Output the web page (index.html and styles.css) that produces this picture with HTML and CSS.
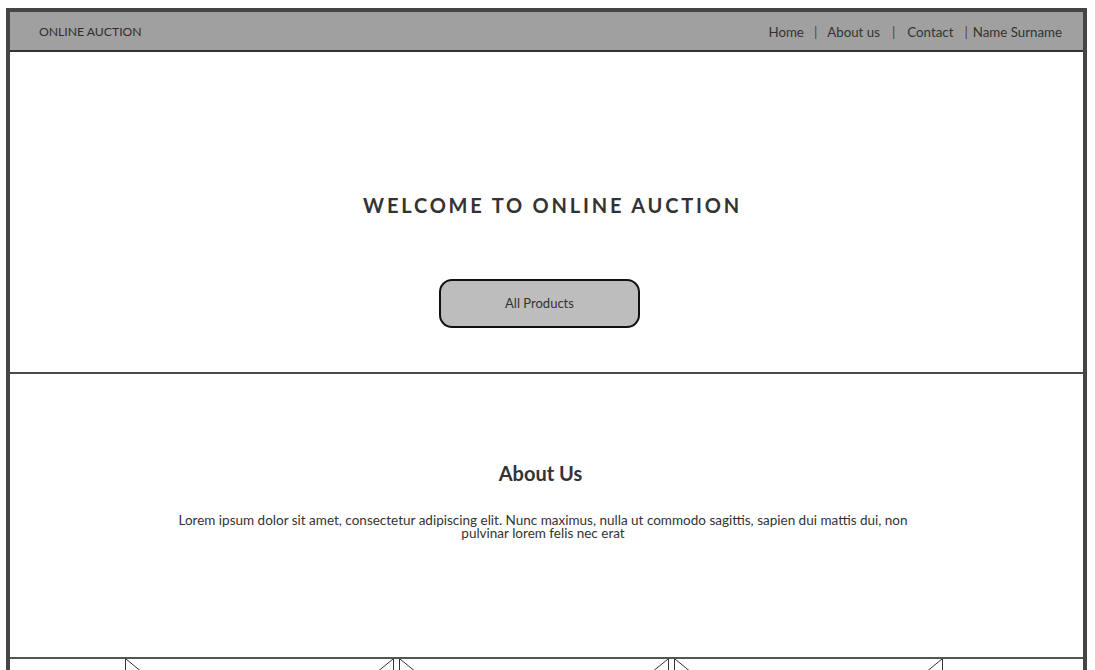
FILE: index.html
```html
<!DOCTYPE html>
<html lang="en">
<head>
<meta charset="utf-8">
<title>Online Auction</title>
<link rel="stylesheet" href="styles.css">
</head>
<body>
<div class="frame">
  <header class="topbar">
    <div class="brand">ONLINE AUCTION</div>
    <nav class="nav">
      <a class="nav-link">Home</a>
      <span class="sep">|</span>
      <a class="nav-link">About us</a>
      <span class="sep sep-wide">|</span>
      <a class="nav-link">Contact</a>
      <span class="sep sep-tight">|</span>
      <a class="nav-link">Name Surname</a>
    </nav>
  </header>
  <section class="hero">
    <h1 class="hero-title">WELCOME TO ONLINE AUCTION</h1>
    <button class="btn">All Products</button>
  </section>
  <section class="about">
    <h2 class="about-title">About Us</h2>
    <p class="about-text">Lorem ipsum dolor sit amet, consectetur adipiscing elit. Nunc maximus, nulla ut commodo sagittis, sapien dui mattis dui, non pulvinar lorem felis nec erat</p>
  </section>
  <section class="cards">
    <div class="card">
      <svg class="ph" viewBox="0 0 100 100" preserveAspectRatio="none"><line x1="0" y1="0" x2="100" y2="100"/><line x1="100" y1="0" x2="0" y2="100"/></svg>
    </div>
    <div class="card">
      <svg class="ph" viewBox="0 0 100 100" preserveAspectRatio="none"><line x1="0" y1="0" x2="100" y2="100"/><line x1="100" y1="0" x2="0" y2="100"/></svg>
    </div>
    <div class="card">
      <svg class="ph" viewBox="0 0 100 100" preserveAspectRatio="none"><line x1="0" y1="0" x2="100" y2="100"/><line x1="100" y1="0" x2="0" y2="100"/></svg>
    </div>
  </section>
</div>
</body>
</html>
```
FILE: styles.css
```css
* { box-sizing: border-box; }
html, body { margin: 0; padding: 0; background: #fff; }
body {
  font-family: Lato, "Open Sans", "Liberation Sans", sans-serif;
  color: #333;
  overflow: hidden;
  height: 670px;
}
.frame {
  margin: 8px 0 0 6px;
  width: 1081px;
  border: 4px solid #454545;
  border-bottom: none;
  min-height: 700px;
}
.topbar {
  height: 40px;
  background: #a0a0a0;
  border-bottom: 2px solid #333;
  display: flex;
  align-items: center;
  justify-content: space-between;
  padding: 1px 21px 0 29px;
}
.brand { color: #2e2e2e; font-size: 12.2px; }
.nav { display: flex; align-items: center; font-size: 13.3px; }
.nav-link { color: #333; }
.sep { color: #444; margin: 0 10px 0 10px; }
.sep-wide { margin: 0 12px 0 12px; }
.sep-tight { margin: 0 5px 0 11px; }
.hero {
  height: 322px;
  display: flex;
  flex-direction: column;
  align-items: center;
  padding-top: 141px;
  border-bottom: 2px solid #4a4a4a;
}
.hero-title {
  margin: 0 0 0 12px;
  font-size: 20px;
  line-height: 24px;
  font-weight: 700;
  letter-spacing: 2.8px;
  color: #333;
}
.btn {
  margin-top: 62px;
  width: 201px;
  height: 49px;
  border: 2.5px solid #111;
  border-radius: 13px;
  background: #bdbdbd;
  font-family: inherit;
  font-size: 13px;
  color: #333;
  padding: 0 0 2px 0;
  margin-left: -14px;
}
.about {
  height: 285px;
  display: flex;
  flex-direction: column;
  align-items: center;
  padding-top: 87px;
  border-bottom: 2px solid #555;
}
.about-title {
  margin: 0 0 0 -12px;
  font-size: 20px;
  line-height: 24px;
  font-weight: 700;
  color: #333;
}
.about-text {
  margin: 29px 0 0 -7px;
  width: 760px;
  text-align: center;
  font-size: 13.5px;
  line-height: 13px;
  color: #333;
}
.cards {
  display: flex;
  gap: 5px;
  padding-left: 115px;
}
.card {
  width: 270px;
  height: 220px;
  border: 1px solid #333;
  border-top: none;
}
.card:nth-child(odd) { width: 269px; }
.ph { display: block; width: 100%; height: 100%; }
.ph line { stroke: #333; stroke-width: 1; vector-effect: non-scaling-stroke; }
```
